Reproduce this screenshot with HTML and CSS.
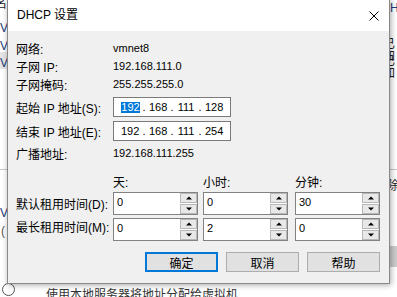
FILE: index.html
```html
<!DOCTYPE html>
<html lang="zh-CN">
<head>
    <meta charset="UTF-8">
    <title>DHCP 设置</title>
    <link rel="stylesheet" href="styles.css">
</head>
<body>

    <!-- ventana de fondo, solo se ven los bordes -->
    <div class="behind">
        <span class="frag f-name">名</span>
        <span class="frag f-v1">V</span>
        <span class="frag f-v2">V</span>
        <span class="frag f-row"></span>
        <span class="frag f-v3">V</span>
        <span class="frag f-line-l"></span>
        <span class="frag f-v4">V</span>
        <span class="frag f-p1">(</span>
        <span class="frag f-radio"></span>
        <span class="frag f-h">H</span>
        <span class="frag f-r1">已加</span>
        <span class="frag f-r2">已加</span>
        <span class="frag f-line-r"></span>
        <span class="frag f-del">除</span>
        <span class="frag f-btn"></span>
        <span class="frag f-bottom">使用本地服务器将地址分配给虚拟机</span>
    </div>

    <div class="dialog">
        <div class="title-bar">
            <span class="title">DHCP 设置</span>
            <span class="close">
                <svg width="10" height="10" viewBox="0 0 10 10">
                    <path d="M0.5 0.5 L9.5 9.5 M9.5 0.5 L0.5 9.5" stroke="#000" stroke-width="1" fill="none"/>
                </svg>
            </span>
        </div>

        <div class="dialog-body">
            <div class="info">
                <span class="lbl">网络:</span><span class="val">vmnet8</span>
                <span class="lbl">子网 IP:</span><span class="val">192.168.111.0</span>
                <span class="lbl">子网掩码:</span><span class="val">255.255.255.0</span>
            </div>

            <div class="ip-row first">
                <span class="lbl">起始 IP 地址(S):</span>
                <div class="ip-box">
                    <span class="ip-field"><span class="sel">192</span></span><span class="ip-dot">.</span>
                    <span class="ip-field">168</span><span class="ip-dot">.</span>
                    <span class="ip-field">111</span><span class="ip-dot">.</span>
                    <span class="ip-field">128</span>
                </div>
            </div>
            <div class="ip-row">
                <span class="lbl">结束 IP 地址(E):</span>
                <div class="ip-box">
                    <span class="ip-field">192</span><span class="ip-dot">.</span>
                    <span class="ip-field">168</span><span class="ip-dot">.</span>
                    <span class="ip-field">111</span><span class="ip-dot">.</span>
                    <span class="ip-field">254</span>
                </div>
            </div>
            <div class="info-row">
                <span class="lbl">广播地址:</span><span class="val">192.168.111.255</span>
            </div>

            <div class="lease">
                <span></span>
                <span class="head">天:</span>
                <span class="head">小时:</span>
                <span class="head">分钟:</span>

                <span class="lbl">默认租用时间(D):</span>
                <div class="spin"><span class="spin-text">0</span><span class="spin-btns"><span class="sb up"></span><span class="sb down"></span></span></div>
                <div class="spin"><span class="spin-text">0</span><span class="spin-btns"><span class="sb up"></span><span class="sb down"></span></span></div>
                <div class="spin"><span class="spin-text">30</span><span class="spin-btns"><span class="sb up"></span><span class="sb down"></span></span></div>

                <span class="lbl">最长租用时间(M):</span>
                <div class="spin"><span class="spin-text">0</span><span class="spin-btns"><span class="sb up"></span><span class="sb down"></span></span></div>
                <div class="spin"><span class="spin-text">2</span><span class="spin-btns"><span class="sb up"></span><span class="sb down"></span></span></div>
                <div class="spin"><span class="spin-text">0</span><span class="spin-btns"><span class="sb up"></span><span class="sb down"></span></span></div>
            </div>

            <div class="buttons">
                <button class="btn default">确定</button>
                <button class="btn">取消</button>
                <button class="btn">帮助</button>
            </div>
        </div>
    </div>

</body>
</html>
```

FILE: styles.css
```css
body {
    margin: 0;
    width: 397px;
    height: 297px;
    overflow: hidden;
    position: relative;
    background-color: #ffffff;
    font-family: "Liberation Sans", "Noto Sans CJK SC", sans-serif;
    font-size: 12px;
    color: #000;
}

/* ventana detrás del diálogo */
.behind {
    position: absolute;
    inset: 0;
}

.frag {
    position: absolute;
    line-height: 12px;
    font-size: 12px;
    color: #1a1a1a;
}

.f-name { left: -5px; top: -2px; }
.f-v1 { left: 0; top: 22px; color: #23407a; }
.f-v2 { left: 0; top: 40px; color: #23407a; }
.f-row { left: 0; top: 52px; width: 7px; height: 17px; background: #e5e5e5; }
.f-v3 { left: 0; top: 57px; color: #23407a; }
.f-line-l { left: 0; top: 169px; width: 7px; height: 1px; background: #c8c8c8; }
.f-v4 { left: 0; top: 207px; color: #23407a; }
.f-p1 { left: 1px; top: 225px; color: #555; }
.f-radio { left: 2px; top: 283px; width: 11px; height: 11px; border: 1px solid #555; border-radius: 50%; }
.f-h { left: 390px; top: 2px; color: #23407a; }
.f-r1 { left: 383px; top: 38px; }
.f-r2 { left: 383px; top: 55px; }
.f-line-r { left: 389px; top: 169px; width: 8px; height: 1px; background: #c8c8c8; }
.f-del { left: 387px; top: 180px; }
.f-btn { left: 390px; top: 246px; width: 7px; height: 21px; background: #cccccc; }
.f-bottom { left: 46px; top: 289px; color: #333; }

.dialog {
    position: absolute;
    left: 7px;
    top: -1px;
    width: 381px;
    border: 1px solid #888888;
    box-shadow: 1px 1px 6px rgba(0, 0, 0, 0.35);
    background-color: #f0f0f0;
}

.title-bar {
    height: 31px;
    background-color: #ffffff;
    display: flex;
    align-items: center;
    justify-content: space-between;
}

.title {
    padding-left: 9px;
    font-size: 12px;
    line-height: 31px;
}

.close {
    width: 30px;
    height: 31px;
    display: flex;
    align-items: center;
    justify-content: center;
}

.dialog-body {
    padding: 8px 9px 11px 8px;
}

.info {
    display: grid;
    grid-template-columns: 97px 1fr;
    grid-auto-rows: 18px;
    align-items: center;
}

.val {
    font-size: 11px;
}

.ip-row,
.info-row {
    display: flex;
    align-items: center;
    height: 24px;
}

.ip-row .lbl,
.info-row .lbl {
    width: 97px;
}

.ip-row.first {
    margin-top: 2px;
}

.info-row {
    height: 20px;
}

.ip-box {
    width: 116px;
    height: 18px;
    border: 1px solid #7a7a7a;
    background: #fff;
    display: flex;
    align-items: center;
    padding-left: 7px;
    box-sizing: border-box;
    width: 118px;
    height: 20px;
    font-size: 11px;
}

.ip-field {
    width: 18px;
    text-align: center;
}

.ip-field .sel {
    display: inline-block;
    width: 19px;
    line-height: 11px;
    background: #0078d7;
    color: #fff;
}

.ip-dot {
    width: 10px;
    text-align: center;
}

.lease {
    margin-top: 11px;
    display: grid;
    grid-template-columns: 97px 90px 92px 85px;
    grid-template-rows: 18px 23px 23px;
    row-gap: 0;
    align-items: center;
}

.lease .spin:nth-child(n+9) {
    margin-top: 6px;
}

.lease .lbl:nth-of-type(3) {
    margin-top: 6px;
}

.head {
    line-height: 18px;
}

.spin {
    width: 85px;
    height: 23px;
    display: flex;
    border: 1px solid #828282;
    box-sizing: border-box;
    background: #fff;
}

.spin-text {
    flex: 1;
    font-size: 11px;
    padding: 3px 0 0 3px;
    line-height: 12px;
}

.spin-btns {
    width: 17px;
    display: flex;
    flex-direction: column;
    gap: 1px;
    padding: 0 0 0 0;
}

.sb {
    flex: 1;
    border: 1px solid #b8b8b8;
    background: #e8e8e8;
    position: relative;
}

.sb::after {
    content: "";
    position: absolute;
    left: 50%;
    top: 50%;
    transform: translate(-50%, -50%);
    border-left: 3px solid transparent;
    border-right: 3px solid transparent;
}

.sb.up::after {
    border-bottom: 3px solid #000;
}

.sb.down::after {
    border-top: 3px solid #000;
}

.buttons {
    margin-top: 14px;
    display: flex;
    justify-content: flex-end;
    gap: 8px;
}

.btn {
    width: 73px;
    height: 20px;
    padding: 0;
    border: 1px solid #adadad;
    background-color: #e1e1e1;
    font-family: "Liberation Sans", "Noto Sans CJK SC", sans-serif;
    font-size: 12px;
    color: #000;
}

.btn.default {
    border: 2px solid #0078d7;
}
```
